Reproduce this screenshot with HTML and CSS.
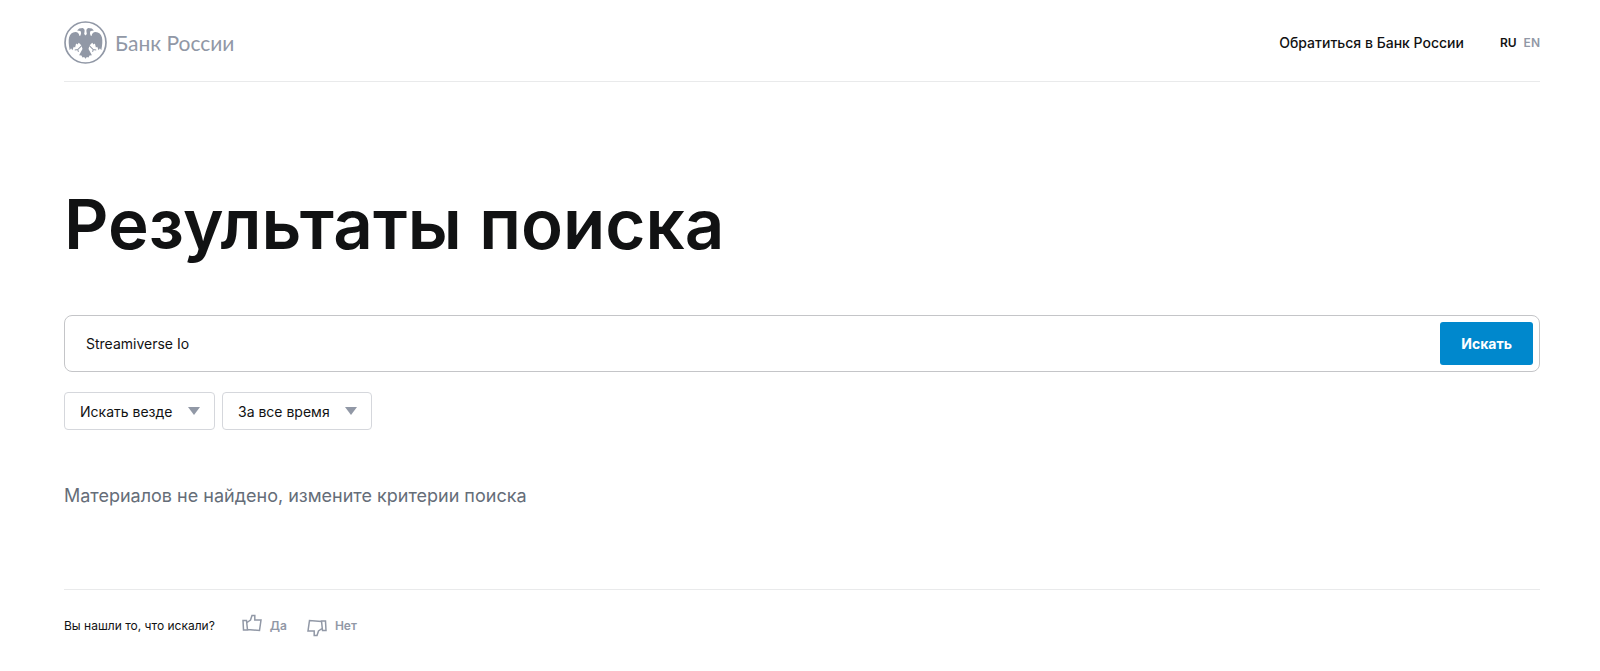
FILE: index.html
```html
<!DOCTYPE html>
<html lang="ru">
<head>
  <meta charset="UTF-8">
  <title>Результаты поиска | Банк России</title>
  <meta name="viewport" content="width=device-width, initial-scale=1.0">
  <link rel="stylesheet" href="styles.css">
</head>
<body>

<div class="page">
  <header class="header">
    <a class="logo" href="#">
      <svg class="logo-emblem" viewBox="23 21 128 128" aria-hidden="true">
        <circle cx="87" cy="85" r="61" fill="none" stroke="currentColor" stroke-width="5"/>
        <path fill="currentColor" d="M62 49 L68 43 L79 42 Q86 45 84 54 L83 60 L87 64 L91 60 L90 54 Q88 45 95 42 L106 43 L112 49 L102 51 Q98 56 102 64 L105 66 Q107 54 117 54 Q132 55 136 70 Q139 84 134 108 L130 102 L126 108 L122 98 L118 100 L115 88 L111 91 L107 86 L101 92 Q97 99 96 104 L106 123 L99 124 L96 130 L91 128 L87 133 L83 128 L78 130 L75 124 L68 123 L78 104 Q77 99 73 92 L67 86 L63 91 L59 88 L56 100 L52 98 L48 108 L44 102 L40 108 Q35 84 38 70 Q42 55 57 54 Q67 54 69 66 L72 64 Q76 56 72 51 Z"/>
        <path fill="none" stroke="currentColor" stroke-width="3" d="M75 95 L64 106 L55 107 M64 106 L66 113 M99 95 L110 106 L119 107 M110 106 L108 113"/>
      </svg>
      <span>Банк России</span>
    </a>
    <nav class="header-nav">
      <a class="contact" href="#">Обратиться в Банк России</a>
      <div class="lang">
        <a class="active" href="#">RU</a>
        <a href="#">EN</a>
      </div>
    </nav>
  </header>

  <main>
    <h1>Результаты поиска</h1>

    <form class="search">
      <div class="search-box">
        <input type="text" aria-label="Поиск" value="Streamiverse Io">
        <button type="button">Искать</button>
      </div>
      <div class="filters">
        <div class="filter">
          <select aria-label="Где искать">
            <option>Искать везде</option>
          </select>
          <svg viewBox="0 0 12 8" aria-hidden="true"><path d="M0 0H12L6 8Z"/></svg>
        </div>
        <div class="filter">
          <select aria-label="Период">
            <option>За все время</option>
          </select>
          <svg viewBox="0 0 12 8" aria-hidden="true"><path d="M0 0H12L6 8Z"/></svg>
        </div>
      </div>
    </form>

    <p class="empty">Материалов не найдено, измените критерии поиска</p>
  </main>

  <section class="feedback">
    <span class="question">Вы нашли то, что искали?</span>
    <button type="button" class="vote vote-yes">
      <svg viewBox="0 0 20 18" aria-hidden="true"><path d="M1 6.500H4.500L5.500 16H1.500ZM5 8.500L8.500 6L10 1.500H12.800V6H19L17.500 16.500L5.500 15.500"/></svg>
      Да
    </button>
    <button type="button" class="vote vote-no">
      <svg viewBox="0 0 20 18" aria-hidden="true"><path d="M1 6.500H4.500L5.500 16H1.500ZM5 8.500L8.500 6L10 1.500H12.800V6H19L17.500 16.500L5.500 15.500"/></svg>
      Нет
    </button>
  </section>
</div>

</body>
</html>
```
FILE: styles.css
```css
* {
  box-sizing: border-box;
}

body {
  margin: 0;
  font-family: Inter, "Liberation Sans", sans-serif;
  font-size: 14px;
  background: #fff;
  color: #111213;
}

a {
  color: inherit;
  text-decoration: none;
}

button,
input,
select {
  font-family: inherit;
  font-size: 14px;
  color: inherit;
}

button {
  border: none;
  cursor: pointer;
}

.page {
  padding: 0 60px 0 64px;
}

.header {
  display: flex;
  justify-content: space-between;
  align-items: center;
  padding: 21px 0 17px;
  border-bottom: 1px solid #e9eaeb;
}

.logo {
  display: flex;
  align-items: center;
  gap: 8px;
  font-family: Lato, sans-serif;
  font-size: 21px;
  color: #9198a6;
}

.logo-emblem {
  width: 43px;
  height: 43px;
}

.header-nav {
  display: flex;
  align-items: center;
  gap: 36px;
  font-weight: 500;
}

.lang {
  display: flex;
  gap: 7px;
  font-size: 12px;
  font-weight: 600;
  color: #9198a6;
}

.lang .active {
  color: #111213;
}

h1 {
  margin: 100px 0 49px;
  font-size: 69px;
  line-height: 84px;
  font-weight: 600;
}

.search-box {
  display: flex;
  padding: 6px;
  border: 1px solid #c4c5c8;
  border-radius: 8px;
}

.search-box input {
  flex: 1;
  min-width: 0;
  padding: 0 15px;
  border: none;
  outline: none;
  background: none;
}

.search-box button {
  height: 43px;
  padding: 0 21px;
  border-radius: 3px;
  background: #0088cd;
  color: #fff;
  font-weight: 700;
}

.filters {
  display: flex;
  gap: 7px;
  margin-top: 20px;
}

.filter {
  display: grid;
  align-items: center;
}

.filter select,
.filter svg {
  grid-area: 1 / 1;
}

.filter select {
  appearance: none;
  height: 38px;
  padding: 0 41px 0 15px;
  border: 1px solid #d5d7dc;
  border-radius: 4px;
  background: #fff;
}

.filter svg {
  justify-self: end;
  width: 12px;
  height: 8px;
  margin-right: 15px;
  fill: #9198a6;
  pointer-events: none;
}

.empty {
  margin: 52px 0 79px;
  font-size: 18px;
  line-height: 28px;
  color: #656d78;
}

.feedback {
  display: flex;
  align-items: center;
  padding: 23px 0;
  border-top: 1px solid #e9eaeb;
}

.question {
  font-size: 12px;
}

.vote {
  display: flex;
  align-items: center;
  gap: 8px;
  margin-left: 20px;
  padding: 0;
  background: none;
  color: #9198a6;
  font-size: 12px;
  font-weight: 600;
}

.vote svg {
  width: 20px;
  height: 18px;
  fill: none;
  stroke: currentColor;
  stroke-width: 1.5;
}

.vote-yes {
  margin-left: 27px;
}

.vote-yes svg {
  margin-bottom: 4px;
}

.vote-no svg {
  margin-top: 6px;
  transform: rotate(180deg);
}
```
